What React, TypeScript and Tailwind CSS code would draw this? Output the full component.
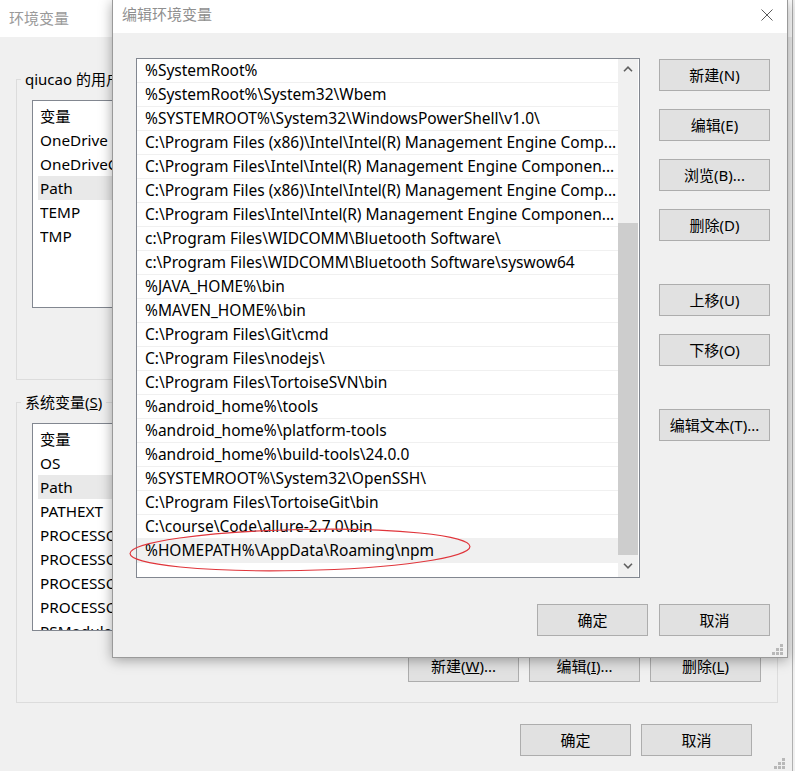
import type { ReactNode } from "react";

const FONT = { fontFamily: '"Noto Sans", "Noto Sans CJK SC", sans-serif' };

const USER_VARS = ["OneDrive", "OneDriveConsumer", "Path", "TEMP", "TMP"];
const SYSTEM_VARS = [
  "OS",
  "Path",
  "PATHEXT",
  "PROCESSOR_ARCHITECTURE",
  "PROCESSOR_IDENTIFIER",
  "PROCESSOR_LEVEL",
  "PROCESSOR_REVISION",
  "PSModulePath",
];

const PATHS = [
  "%SystemRoot%",
  "%SystemRoot%\\System32\\Wbem",
  "%SYSTEMROOT%\\System32\\WindowsPowerShell\\v1.0\\",
  "C:\\Program Files (x86)\\Intel\\Intel(R) Management Engine Comp...",
  "C:\\Program Files\\Intel\\Intel(R) Management Engine Componen...",
  "C:\\Program Files (x86)\\Intel\\Intel(R) Management Engine Comp...",
  "C:\\Program Files\\Intel\\Intel(R) Management Engine Componen...",
  "c:\\Program Files\\WIDCOMM\\Bluetooth Software\\",
  "c:\\Program Files\\WIDCOMM\\Bluetooth Software\\syswow64",
  "%JAVA_HOME%\\bin",
  "%MAVEN_HOME%\\bin",
  "C:\\Program Files\\Git\\cmd",
  "C:\\Program Files\\nodejs\\",
  "C:\\Program Files\\TortoiseSVN\\bin",
  "%android_home%\\tools",
  "%android_home%\\platform-tools",
  "%android_home%\\build-tools\\24.0.0",
  "%SYSTEMROOT%\\System32\\OpenSSH\\",
  "C:\\Program Files\\TortoiseGit\\bin",
  "C:\\course\\Code\\allure-2.7.0\\bin",
  "%HOMEPATH%\\AppData\\Roaming\\npm",
];

function Btn({ children, className = "" }: { children: ReactNode; className?: string }) {
  return (
    <button
      className={`w-[111px] h-[32px] shrink-0 border border-[#adadad] bg-[#e1e1e1] text-[15px] text-black flex items-center justify-center ${className}`}
    >
      {children}
    </button>
  );
}

function Grip() {
  return (
    <svg width="11" height="11" viewBox="0 0 11 11">
      {[
        [8, 0],
        [4, 4],
        [8, 4],
        [0, 8],
        [4, 8],
        [8, 8],
      ].map(([x, y]) => (
        <rect key={`${x}-${y}`} x={x} y={y} width="3" height="3" fill="#b8b8b8" />
      ))}
    </svg>
  );
}

// the part of the back window lists that peeks out left of the dialog
function VarList({ items, selected }: { items: string[]; selected: string }) {
  return (
    <div className="ml-[15px] w-[729px] h-[208px] border border-[#828790] bg-white pt-[3px] pl-[5px] overflow-hidden">
      {["变量", ...items].map((name, i) => (
        <div
          key={name + i}
          className={`h-[24px] flex items-center pl-[2px] text-[15.3px] ${
            name === selected ? "bg-[#e9e9e9]" : ""
          }`}
        >
          <span className="w-[72px] overflow-hidden whitespace-nowrap">{name}</span>
        </div>
      ))}
    </div>
  );
}

function Chevron({ down }: { down?: boolean }) {
  return (
    <svg width="10" height="6" viewBox="0 0 10 6" className={down ? "rotate-180" : ""}>
      <path d="M1 5.2 L5 1.2 L9 5.2" fill="none" stroke="#606060" strokeWidth="1.6" />
    </svg>
  );
}

export default function App() {
  return (
    <div className="relative w-[795px] h-[771px] overflow-hidden bg-[#f0f0f0] text-black" style={FONT}>
      {/* Background window: 环境变量 */}
      <div className="w-[793px] h-[771px] border-r border-[#b0b0b0] flex flex-col">
        <div className="h-[37px] bg-white flex items-center pl-[9px] text-[15px] text-[#9a9a9a]">环境变量</div>

        <div className="ml-[16px] mt-[42px] w-[762px] h-[301px] border border-[#dcdcdc]">
          <div className="-mt-[11px] ml-[4px] w-[91px] pl-[4px] h-[20px] flex items-center bg-[#f0f0f0] text-[15px] overflow-hidden whitespace-nowrap">
            qiucao 的用户变量(U)
          </div>
          <div className="mt-[11px]">
            <VarList items={USER_VARS} selected="Path" />
          </div>
        </div>

        <div className="ml-[16px] mt-[22px] w-[762px] h-[301px] border border-[#dcdcdc] flex flex-col">
          <div className="-mt-[11px] ml-[4px] w-fit px-[4px] h-[20px] flex items-center bg-[#f0f0f0] text-[15px]">
            系统变量(<span className="underline">S</span>)
          </div>
          <div className="mt-[11px]">
            <VarList items={SYSTEM_VARS} selected="Path" />
          </div>
          <div className="mt-[19px] flex justify-end gap-[10px] pr-[16px]">
            <Btn>
              新建(<span className="underline">W</span>)...
            </Btn>
            <Btn>
              编辑(<span className="underline">I</span>)...
            </Btn>
            <Btn>
              删除(<span className="underline">L</span>)
            </Btn>
          </div>
        </div>

        <div className="mt-[21px] flex justify-end gap-[10px] pr-[40px]">
          <Btn>确定</Btn>
          <Btn>取消</Btn>
        </div>
        <div className="mt-auto flex justify-end pr-[7px] pb-[2px]">
          <Grip />
        </div>
      </div>

      {/* Foreground dialog: 编辑环境变量 */}
      <div className="absolute left-[112px] top-0 w-[676px] h-[658px] border-x border-b border-[#9a9a9a] bg-[#f0f0f0] shadow-[0_2px_12px_rgba(0,0,0,0.35)] flex flex-col">
        <div className="h-[33px] shrink-0 bg-white flex items-center justify-between pl-[9px] pr-[14px] pb-[4px]">
          <span className="text-[15px] text-[#8f8f8f]">编辑环境变量</span>
          <svg width="12" height="12" viewBox="0 0 12 12">
            <path d="M0.5 0.5 L11.5 11.5 M11.5 0.5 L0.5 11.5" stroke="#5a5a5a" strokeWidth="1" />
          </svg>
        </div>

        <div className="mt-[25px] ml-[23px] flex items-start gap-[19px]">
          <div className="w-[504px] h-[520px] border border-[#828790] bg-white flex">
            <div className="w-[481px] flex flex-col">
              {PATHS.map((p, i) => (
                <div
                  key={i}
                  className={`h-[24px] shrink-0 border-b border-[#f0f0f0] pl-[8px] pt-[1px] flex items-center text-[15.5px] whitespace-nowrap overflow-hidden ${
                    i === PATHS.length - 1 ? "bg-[#f0f0f0]" : ""
                  }`}
                >
                  {p}
                </div>
              ))}
            </div>
            <div className="w-[20px] bg-[#f0f0f0] flex flex-col">
              <div className="h-[20px] flex items-center justify-center">
                <Chevron />
              </div>
              <div className="h-[144px]" />
              <div className="h-[332px] bg-[#cdcdcd]" />
              <div className="flex-1 flex items-center justify-center">
                <Chevron down />
              </div>
            </div>
          </div>

          <div className="pt-[1px] flex flex-col">
            <Btn>新建(N)</Btn>
            <Btn className="mt-[18px]">编辑(E)</Btn>
            <Btn className="mt-[18px]">浏览(B)...</Btn>
            <Btn className="mt-[18px]">删除(D)</Btn>
            <Btn className="mt-[43px]">上移(U)</Btn>
            <Btn className="mt-[18px]">下移(O)</Btn>
            <Btn className="mt-[43px]">编辑文本(T)...</Btn>
          </div>
        </div>

        <div className="mt-[26px] flex justify-end gap-[11px] pr-[17px]">
          <Btn>确定</Btn>
          <Btn>取消</Btn>
        </div>
        <div className="mt-auto flex justify-end pr-[4px] pb-[2px]">
          <Grip />
        </div>
      </div>

      {/* Red annotation ellipse */}
      <svg className="absolute left-[126px] top-[524px] pointer-events-none" width="350" height="52" viewBox="0 0 350 52">
        <ellipse
          cx="174"
          cy="26"
          rx="170"
          ry="20.5"
          fill="none"
          stroke="#e0353b"
          strokeWidth="1.2"
          transform="rotate(-1.2 174 26)"
        />
      </svg>
    </div>
  );
}
